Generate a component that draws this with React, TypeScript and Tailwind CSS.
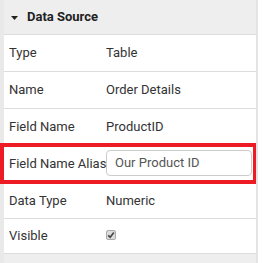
import React from 'react';

const rows: { label: string; value: string }[] = [
  { label: 'Type', value: 'Table' },
  { label: 'Name', value: 'Order Details' },
  { label: 'Field Name', value: 'ProductID' },
];

const Row: React.FC<{ label: string; h?: string; children: React.ReactNode }> = ({ label, h = 'h-[37px]', children }) => (
  <div className={`flex items-center border-b border-[#dddddd] ${h}`}>
    <div className="w-[102px] pl-[5px] shrink-0 whitespace-nowrap">{label}</div>
    <div className="flex-1">{children}</div>
  </div>
);

export default function App() {
  return (
    <div
      className="w-[262px] h-[263px] flex bg-white text-[13px] text-[#333333] overflow-hidden"
      style={{ fontFamily: 'Roboto, "Liberation Sans", sans-serif' }}
    >
      {/* left gutter */}
      <div className="w-[4px] shrink-0 bg-[#e9e9e9]" />

      {/* property panel */}
      <div className="w-[252px] shrink-0 flex flex-col bg-[#eeeeee]">
        <div className="h-[35px] shrink-0 flex items-center gap-[9px] pl-[7px] border-b border-[#dddddd] font-bold text-[13px] text-[#222222]">
          <svg width="7" height="4" viewBox="0 0 7 4" className="mt-px">
            <path d="M0 0 L7 0 L3.5 4 Z" fill="#222222" />
          </svg>
          <span>Data Source</span>
        </div>

        <div className="bg-white flex flex-col">
          {rows.map((r) => (
            <Row key={r.label} label={r.label}>
              {r.value}
            </Row>
          ))}
        </div>

        {/* highlighted row */}
        <div className="-mt-[3px] -ml-[4px] w-[257px] h-[41px] shrink-0 border-[4px] border-[#ed1c24] bg-white flex items-center">
          <div className="w-[102px] pl-[5px] shrink-0 whitespace-nowrap">Field Name Alias</div>
          <div className="w-[146px] h-[26px] -mt-[1px] border border-[#cccccc] rounded-[4px] flex items-center pl-[8px] text-[#555555]">
            Our Product ID
          </div>
        </div>

        <div className="bg-white flex flex-col">
          <Row label="Data Type" h="h-[35px]">Numeric</Row>
          <Row label="Visible" h="h-[35px]">
            <span className="block w-[10px] h-[10px] -mt-[3px] rounded-[2px] border border-[#aaaaaa] bg-[#dcdcdc]">
              <svg width="8" height="8" viewBox="0 0 8 8" className="block">
                <path d="M1.2 4.3 L3.2 6.2 L6.8 1.6" stroke="#444444" strokeWidth="1.6" fill="none" />
              </svg>
            </span>
          </Row>
        </div>

        <div className="flex-1 bg-[#eeeeee]" />
      </div>

      {/* right edge */}
      <div className="w-[2px] shrink-0 bg-[#e4e4e4]" />
      <div className="flex-1 bg-white" />
    </div>
  );
}
